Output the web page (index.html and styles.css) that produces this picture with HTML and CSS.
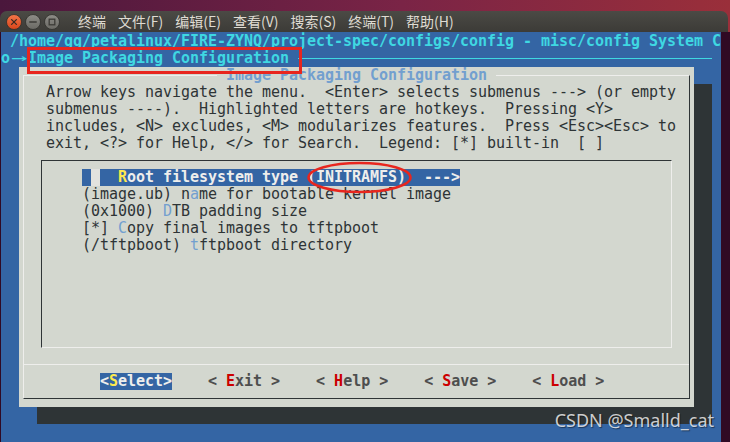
FILE: index.html
```html
<!DOCTYPE html>
<html lang="zh-CN">
<head>
    <meta charset="UTF-8">
    <meta name="viewport" content="width=device-width, initial-scale=1.0">
    <title>终端 - menuconfig</title>
    <link rel="stylesheet" href="styles.css">
</head>
<body>
<div class="screen">
    <!-- Thanh tiêu đề cửa sổ -->
    <div class="titlebar">
        <div class="win-buttons">
            <span class="wbtn">
                <svg viewBox="0 0 16 16">
                    <defs>
                        <linearGradient id="gClose" x1="0" y1="0" x2="0" y2="1">
                            <stop offset="0" stop-color="#f4774a"/>
                            <stop offset="1" stop-color="#d9441a"/>
                        </linearGradient>
                    </defs>
                    <circle cx="8" cy="8" r="7.5" fill="url(#gClose)" stroke="#2f2e2b" stroke-width="0.8"/>
                    <path d="M5.6 5.6 L10.4 10.4 M10.4 5.6 L5.6 10.4" stroke="#3b2a22" stroke-width="1.3" stroke-linecap="round"/>
                </svg>
            </span>
            <span class="wbtn">
                <svg viewBox="0 0 16 16">
                    <defs>
                        <linearGradient id="gGray" x1="0" y1="0" x2="0" y2="1">
                            <stop offset="0" stop-color="#8e8d87"/>
                            <stop offset="1" stop-color="#6a6964"/>
                        </linearGradient>
                    </defs>
                    <circle cx="8" cy="8" r="7.5" fill="url(#gGray)" stroke="#2f2e2b" stroke-width="0.8"/>
                    <path d="M4.8 8 H11.2" stroke="#3c3b37" stroke-width="1.5" stroke-linecap="round"/>
                </svg>
            </span>
            <span class="wbtn">
                <svg viewBox="0 0 16 16">
                    <circle cx="8" cy="8" r="7.5" fill="url(#gGray)" stroke="#2f2e2b" stroke-width="0.8"/>
                    <rect x="5.2" y="5.2" width="5.6" height="5.6" fill="none" stroke="#3c3b37" stroke-width="1.3"/>
                </svg>
            </span>
        </div>
        <ul class="menu">
            <li>终端</li>
            <li>文件(F)</li>
            <li>编辑(E)</li>
            <li>查看(V)</li>
            <li>搜索(S)</li>
            <li>终端(T)</li>
            <li>帮助(H)</li>
        </ul>
    </div>

    <!-- Vùng terminal -->
    <div class="body-row">
        <div class="terminal">
            <div class="row path"> /home/gg/petalinux/FIRE-ZYNQ/project-spec/configs/config - misc/config System Configuration</div>
            <div class="row crumb"><span>o</span><span class="arrow">→</span><span>Image Packaging Configuration</span><span class="rule"></span></div>

            <div class="dialog">
                <div class="frame">
                    <div class="dlg-title">Image Packaging Configuration</div>
                    <div class="help">
                        <div class="row">Arrow keys navigate the menu.  &lt;Enter&gt; selects submenus ---&gt; (or empty</div>
                        <div class="row">submenus ----).  Highlighted letters are hotkeys.  Pressing &lt;Y&gt;</div>
                        <div class="row">includes, &lt;N&gt; excludes, &lt;M&gt; modularizes features.  Press &lt;Esc&gt;&lt;Esc&gt; to</div>
                        <div class="row">exit, &lt;?&gt; for Help, &lt;/&gt; for Search.  Legend: [*] built-in  [ ]</div>
                    </div>

                    <div class="menubox">
                        <div class="row"><span class="bar"> <span class="cursor"></span>  <span class="hk">R</span>oot filesystem type (INITRAMFS)  ---&gt;</span></div>
                        <div class="row">(image.ub) n<span class="hk">a</span>me for bootable kernel image</div>
                        <div class="row">(0x1000) <span class="hk">D</span>TB padding size</div>
                        <div class="row">[*] <span class="hk">C</span>opy final images to tftpboot</div>
                        <div class="row">(/tftpboot) <span class="hk">t</span>ftpboot directory</div>
                    </div>

                    <div class="sep"></div>

                    <div class="buttons">
                        <span class="btn active">&lt;<span class="hk">S</span>elect&gt;</span>
                        <span class="btn">&lt; <span class="hk">E</span>xit &gt;</span>
                        <span class="btn">&lt; <span class="hk">H</span>elp &gt;</span>
                        <span class="btn">&lt; <span class="hk">S</span>ave &gt;</span>
                        <span class="btn">&lt; <span class="hk">L</span>oad &gt;</span>
                    </div>
                </div>
            </div>
        </div>
    </div>

    <!-- Chú thích màu đỏ vẽ đè lên ảnh -->
    <svg class="marks" viewBox="0 0 730 442">
        <rect x="28.5" y="48.5" width="272" height="24" fill="none" stroke="#e8261e" stroke-width="3"/>
        <ellipse cx="359.5" cy="177.5" rx="51" ry="14.5" fill="none" stroke="#e8261e" stroke-width="2.5"/>
    </svg>

    <div class="watermark">CSDN @Smalld_cat</div>
</div>
</body>
</html>
```

FILE: styles.css
```css
* {
    box-sizing: border-box;
}
body {
    margin: 0;
    width: 730px;
    height: 442px;
    overflow: hidden;
    background-color: #300a24;
    font-family: "DejaVu Sans Mono", monospace;
}
.screen {
    position: relative;
    width: 730px;
    height: 442px;
    padding-top: 11px;
    background: linear-gradient(90deg, #4a173c, #7a2446 55%, #9a2f3a);
}

/* title bar */
.titlebar {
    display: flex;
    align-items: center;
    width: 728px;
    height: 21px;
    padding-left: 6px;
    background: linear-gradient(#4b4a45, #3c3b37);
    border-radius: 7px 7px 0 0;
}
.win-buttons {
    display: flex;
    gap: 3px;
}
.wbtn svg {
    display: block;
    width: 16px;
    height: 16px;
}
.menu {
    display: flex;
    gap: 12px;
    margin: 0 0 0 18px;
    padding: 0;
    list-style: none;
    font-family: "Noto Sans CJK SC", sans-serif;
    font-size: 14px;
    line-height: 21px;
    color: #dfdbd2;
}

/* terminal */
.body-row {
    display: flex;
    height: 410px;
    background-color: #300a24;
}
.terminal {
    width: 720px;
    margin-left: 1px;
    padding-top: 1px;
    background-color: #3465a4;
    overflow: hidden;
    font-size: 15px;
    line-height: 17px;
    letter-spacing: -0.03px;
}
.row {
    height: 17px;
    white-space: pre;
}
.path {
    color: #3fd8e2;
    font-weight: bold;
}
.crumb {
    display: flex;
    align-items: center;
    color: #3fd8e2;
    font-weight: bold;
}
.arrow {
    display: inline-block;
    width: 18px;
    text-align: center;
    font-weight: normal;
    transform: scaleX(1.8);
}
.rule {
    width: 414px;
    height: 1px;
    margin-left: 9px;
    background-color: #3fd8e2;
}

/* dialog */
.dialog {
    width: 675px;
    height: 340px;
    margin-left: 18px;
    padding: 8px 4px;
    background-color: #d3d7cf;
    box-shadow: 18px 17px 0 #2e3436;
}
.frame {
    height: 100%;
    border: 1px solid;
    border-color: #eeeeec #2e3436 #2e3436 #eeeeec;
}
.dlg-title {
    width: fit-content;
    height: 17px;
    margin: -9px auto 0;
    padding: 0 9px;
    background-color: #d3d7cf;
    color: #729fcf;
    font-weight: bold;
    white-space: pre;
}
.help {
    padding-left: 22px;
    color: #2e3436;
}
.menubox {
    height: 188px;
    margin: 8px 17px 0;
    padding: 8px 0 0 40px;
    border: 1px solid;
    border-color: #2e3436 #eeeeec #eeeeec #2e3436;
    color: #2e3436;
}
.menubox .hk {
    color: #729fcf;
}
.bar {
    display: inline-block;
    height: 17px;
    background-color: #3465a4;
    color: #eeeeec;
    font-weight: bold;
}
.menubox .bar .hk {
    color: #fce94f;
}
.cursor {
    display: inline-block;
    width: 9px;
    height: 17px;
    vertical-align: top;
    background-color: #e2e2de;
}
.sep {
    height: 1px;
    margin-top: 16px;
    background-color: #eeeeec;
}
.buttons {
    display: flex;
    gap: 36px;
    height: 17px;
    margin-top: 8px;
    padding-left: 76px;
}
.btn {
    color: #4e4e4e;
    font-weight: bold;
    white-space: pre;
}
.btn .hk {
    color: #cc0000;
}
.btn.active {
    background-color: #3465a4;
    color: #eeeeec;
}
.btn.active .hk {
    color: #fce94f;
}

/* overlays */
.marks {
    position: absolute;
    top: 0;
    left: 0;
    width: 730px;
    height: 442px;
    pointer-events: none;
}
.watermark {
    position: absolute;
    top: 408px;
    right: 16px;
    font-family: "Noto Sans", sans-serif;
    font-size: 18px;
    line-height: 24px;
    color: rgba(236, 236, 236, 0.85);
    text-shadow: 1px 1px 1px rgba(0, 0, 0, 0.45);
}
```
